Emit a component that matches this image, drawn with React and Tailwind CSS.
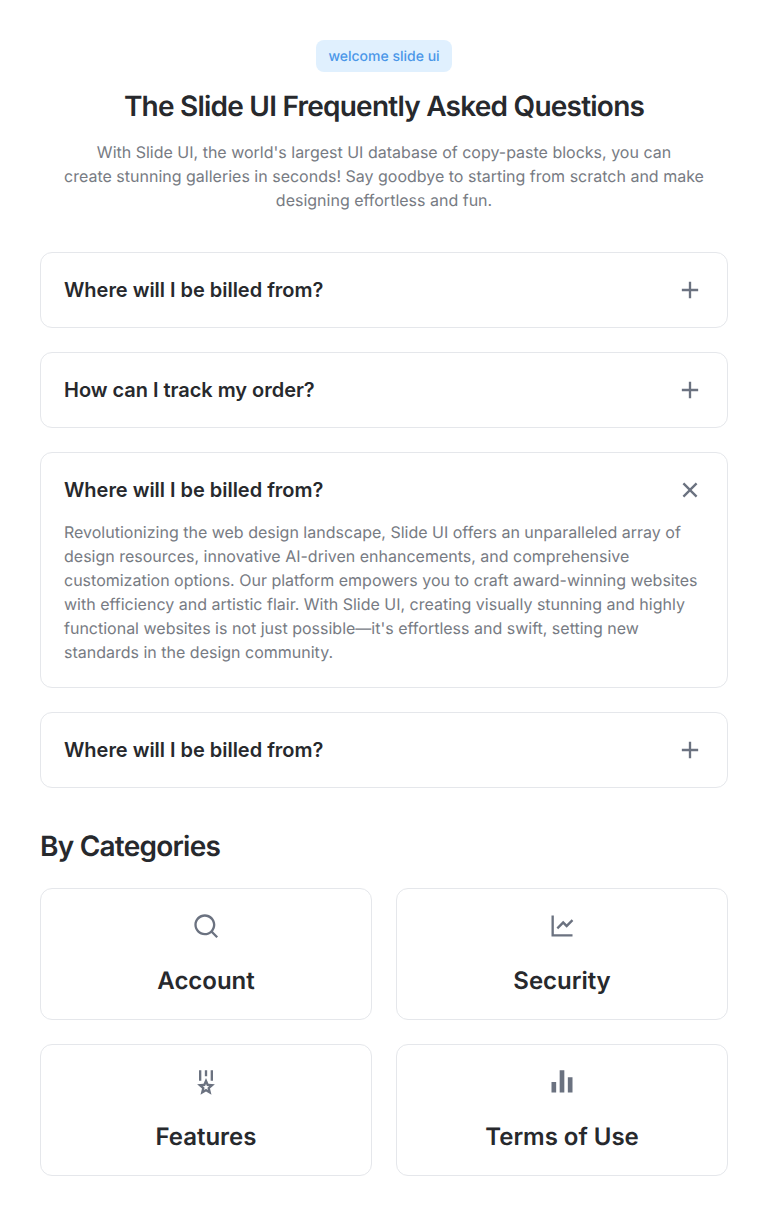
import {
  RiAddLine,
  RiBarChartFill,
  RiCloseLine,
  RiLineChartLine,
  RiMedal2Line,
  RiSearchLine,
} from "react-icons/ri";

const questions = [
  { title: "Where will I be billed from?" },
  { title: "How can I track my order?" },
  {
    title: "Where will I be billed from?",
    answer:
      "Revolutionizing the web design landscape, Slide UI offers an unparalleled array of design resources, innovative AI-driven enhancements, and comprehensive customization options. Our platform empowers you to craft award-winning websites with efficiency and artistic flair. With Slide UI, creating visually stunning and highly functional websites is not just possible—it's effortless and swift, setting new standards in the design community.",
  },
  { title: "Where will I be billed from?" },
];

const categories = [
  { title: "Account", Icon: RiSearchLine },
  { title: "Security", Icon: RiLineChartLine },
  { title: "Features", Icon: RiMedal2Line },
  { title: "Terms of Use", Icon: RiBarChartFill },
];

function Question({ title, answer }) {
  const Icon = answer ? RiCloseLine : RiAddLine;
  return (
    <article className="rounded-xl border border-[#e5e7eb] p-[23px]">
      <button type="button" className="flex w-full items-center justify-between text-left">
        <span className="text-xl leading-7 font-semibold tracking-[-0.03px]">{title}</span>
        <Icon className="size-7 text-[#6b7280]" />
      </button>
      {answer && <p className="mt-4 text-base text-[#777b83]">{answer}</p>}
    </article>
  );
}

export default function App() {
  return (
    <main className="min-h-screen bg-white p-10 font-['Inter',sans-serif] text-[#27292d] antialiased [text-rendering:geometricPrecision]">
      <header className="flex flex-col items-center text-center">
        <span className="flex h-8 items-center rounded-lg bg-[#e0f0fe] px-3 pt-px text-sm font-medium text-[#4b97e8]">
          welcome slide ui
        </span>
        <h1 className="mt-4 text-[28px] leading-9 font-semibold tracking-[-0.77px]">
          The Slide UI Frequently Asked Questions
        </h1>
        <p className="mt-4 w-[648px] text-base text-[#777b83]">
          With Slide UI, the world's largest UI database of copy-paste blocks, you can
          <br />
          create stunning galleries in seconds! Say goodbye to starting from scratch and make
          <br />
          designing effortless and fun.
        </p>
      </header>
      <section className="mt-10 flex flex-col gap-6">
        {questions.map((question, index) => (
          <Question key={index} {...question} />
        ))}
      </section>
      <h2 className="mt-10 text-[28px] leading-9 font-semibold tracking-[-0.77px]">By Categories</h2>
      <section className="mt-6 grid grid-cols-2 gap-6">
        {categories.map(({ title, Icon }) => (
          <a
            key={title}
            className="flex flex-col items-center gap-[25px] rounded-xl border border-[#e5e7eb] px-[23px] pt-[23px] pb-[22px]"
          >
            <Icon className="size-7 text-[#6b7280]" />
            <span className="text-2xl leading-8 font-semibold tracking-[-0.03px]">{title}</span>
          </a>
        ))}
      </section>
    </main>
  );
}
